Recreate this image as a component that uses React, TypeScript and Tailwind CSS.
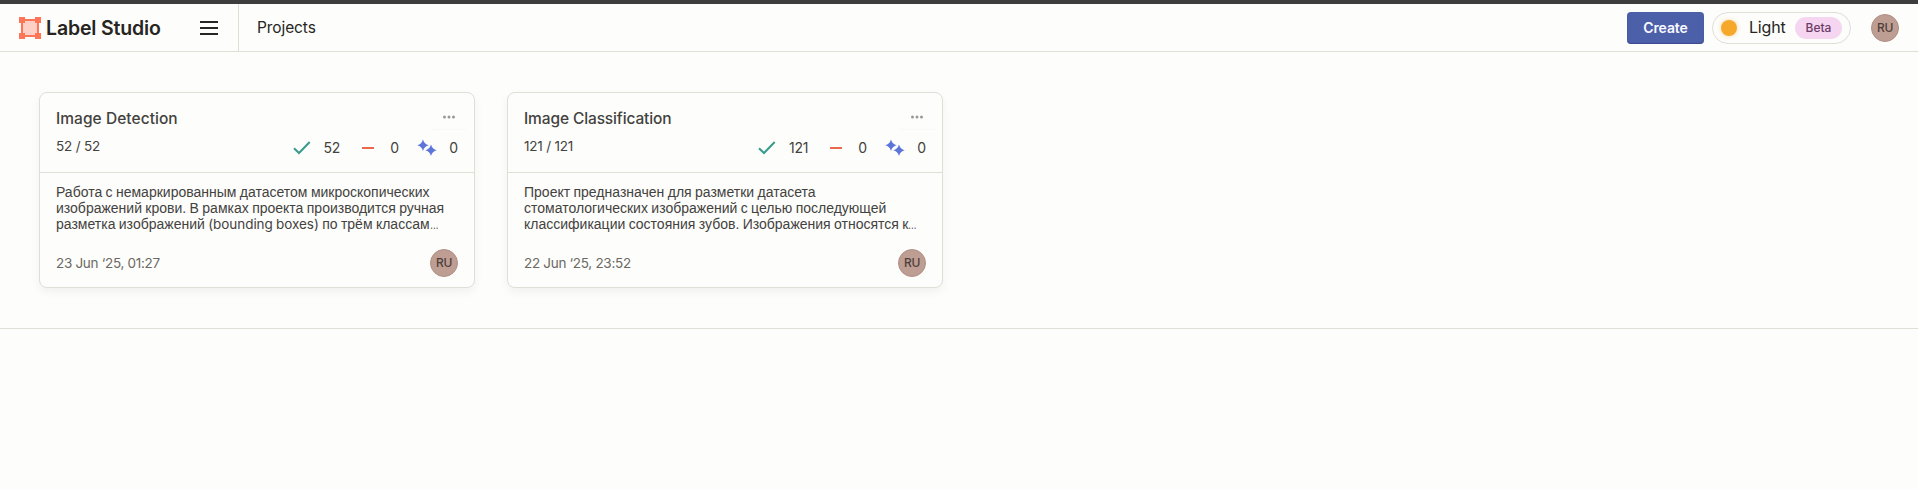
import React from "react";

type Project = {
  title: string;
  titleTracking: string;
  progress: string;
  done: string;
  description: React.ReactNode[];
  date: string;
};

const ellipsis = <span className="inline-block origin-left scale-x-[0.62]">…</span>;

const projects: Project[] = [
  {
    title: "Image Detection",
    titleTracking: "tracking-[0.05px]",
    progress: "52 / 52",
    done: "52",
    description: [
      "Работа с немаркированным датасетом микроскопических",
      "изображений крови. В рамках проекта производится ручная",
      <>
        разметка изображений{" "}
        <span className="font-['Inter',sans-serif] text-[13.5px] tracking-[-0.05px]">(bounding boxes)</span> по трём
        классам{ellipsis}
      </>,
    ],
    date: "23 Jun ‘25, 01:27",
  },
  {
    title: "Image Classification",
    titleTracking: "tracking-[-0.12px]",
    progress: "121 / 121",
    done: "121",
    description: [
      "Проект предназначен для разметки датасета",
      "стоматологических изображений с целью последующей",
      <>классификации состояния зубов. Изображения относятся к{ellipsis}</>,
    ],
    date: "22 Jun ‘25, 23:52",
  },
];

function Avatar() {
  return (
    <div className="flex size-7 shrink-0 items-center justify-center rounded-full border border-[#b09086] bg-[#be9e93] text-[12px] font-medium tracking-[-0.3px] text-[#4f3f3a]">
      RU
    </div>
  );
}

function Logo() {
  return (
    <svg width="22" height="22" viewBox="0 0 22 22" className="shrink-0">
      <rect x="3" y="3" width="16" height="16" fill="#ffd0c6" stroke="#ff7557" strokeWidth="2" />
      <path
        fill="#ff7557"
        d="M0 0h6v6H0zM16 0h6v6h-6zM0 16h6v6H0zM16 16h6v6h-6z"
      />
    </svg>
  );
}

function Check() {
  return (
    <svg width="18" height="14" viewBox="0 0 18 14" className="shrink-0">
      <path d="M1 7.2 6 12 16.7 1" fill="none" stroke="#389b8d" strokeWidth="2" />
    </svg>
  );
}

function Sparks() {
  return (
    <svg width="20" height="18" viewBox="0 0 20 18" className="shrink-0" fill="#5b76d8">
      <path d="M6 .6Q7.3 5.2 11.7 6.3 7.3 7.4 6 12 4.7 7.4.3 6.3 4.7 5.2 6 .6z" />
      <path d="M14 5.6Q15.3 10.2 19.7 11.3 15.3 12.4 14 17 12.7 12.4 8.3 11.3 12.7 10.2 14 5.6z" />
    </svg>
  );
}

function Card({ p }: { p: Project }) {
  return (
    <article className="flex h-[196px] w-[436px] flex-col rounded-lg border border-[#dedfd5] bg-[#fdfdfb] text-[#43423e] shadow-[0_4px_10px_rgba(0,0,0,0.05)]">
      <div className="h-[80px] shrink-0 border-b border-[#dedfd5] pl-4">
        <div className="flex h-9 items-end justify-between pr-[7px]">
          <h2 className={`mb-[-2px] text-[15.5px] leading-6 font-medium ${p.titleTracking}`}>{p.title}</h2>
          <button className="flex h-6 w-9 items-center justify-center rounded shadow-[0_1px_1px_rgba(0,0,0,0.025)]">
            <svg width="12" height="4" viewBox="0 0 12 4" fill="#9a9994">
              <circle cx="1.5" cy="2" r="1.5" />
              <circle cx="6" cy="2" r="1.5" />
              <circle cx="10.5" cy="2" r="1.5" />
            </svg>
          </button>
        </div>
        <div className="flex h-[40px] items-center justify-between pr-4 text-[13.5px] tracking-[-0.2px]">
          <span className="mb-[5px]">{p.progress}</span>
          <div className="mb-[3px] flex items-center text-[14px]">
            <Check />
            <span className="ml-[13px]">{p.done}</span>
            <span className="ml-[22px] h-0.5 w-3 bg-[#e8694d]" />
            <span className="ml-4">0</span>
            <span className="ml-[18px]">
              <Sparks />
            </span>
            <span className="ml-[12.5px]">0</span>
          </div>
        </div>
      </div>
      <div className="h-[67px] shrink-0 px-4 pt-[11px] font-['Liberation_Sans',sans-serif] text-[14px] leading-4 whitespace-nowrap [word-spacing:-0.5px]">
        {p.description.map((line, i) => (
          <div key={i} className="h-4">
            {line}
          </div>
        ))}
      </div>
      <div className="flex flex-1 items-center justify-between px-4 pb-0.5 text-[13.5px] text-[#6b6963]">
        <span className="mt-0.5 tracking-[-0.3px]">{p.date}</span>
        <Avatar />
      </div>
    </article>
  );
}

export default function App() {
  return (
    <div className="min-h-[489px] bg-[#fdfdfb] font-['Inter',sans-serif] text-[#262522]">
      <div className="h-1 bg-[#3d3d3d]" />
      <header className="flex h-12 items-center border-b border-[#dedfd5]">
        <div className="flex h-full w-[239px] items-center border-r border-[#dedfd5] pl-[19px]">
          <Logo />
          <span className="mt-[3px] ml-[5px] w-[115px] text-[19.5px] font-semibold tracking-[-0.15px] whitespace-nowrap">
            Label Studio
          </span>
          <div className="ml-[39px] flex w-[18px] flex-col gap-1">
            <span className="h-0.5 bg-[#262522]" />
            <span className="h-0.5 bg-[#262522]" />
            <span className="h-0.5 bg-[#262522]" />
          </div>
        </div>
        <span className="mt-px ml-[18px] text-[15.5px] tracking-[-0.1px]">Projects</span>
        <div className="ml-auto flex items-center pr-[19px]">
          <button className="h-8 w-[77px] rounded bg-[#4c5fa9] text-[14px] font-semibold tracking-[-0.1px] text-[#f8f9ff] shadow-[inset_0_-1px_1px_rgba(40,50,110,0.45)]">
            Create
          </button>
          <div className="ml-2 flex h-8 w-[139px] items-center rounded-full border border-[#dedfd5] pl-2">
            <span className="size-4 rounded-full bg-[#f5a82a] shadow-[0_0_5px_rgba(245,168,42,0.4)]" />
            <span className="mb-px ml-[12px] w-[46px] text-[16px] tracking-[-0.2px]">Light</span>
            <span className="flex h-[22px] w-[47px] items-center justify-center rounded-full bg-[#f6d5f1] text-[12px] font-medium text-[#6b3c66]">
              Beta
            </span>
          </div>
          <div className="ml-5">
            <Avatar />
          </div>
        </div>
      </header>
      <main className="flex gap-8 border-b border-[#dedfd5] pt-10 pb-10 pl-[39px]">
        {projects.map((p) => (
          <Card key={p.title} p={p} />
        ))}
      </main>
    </div>
  );
}
